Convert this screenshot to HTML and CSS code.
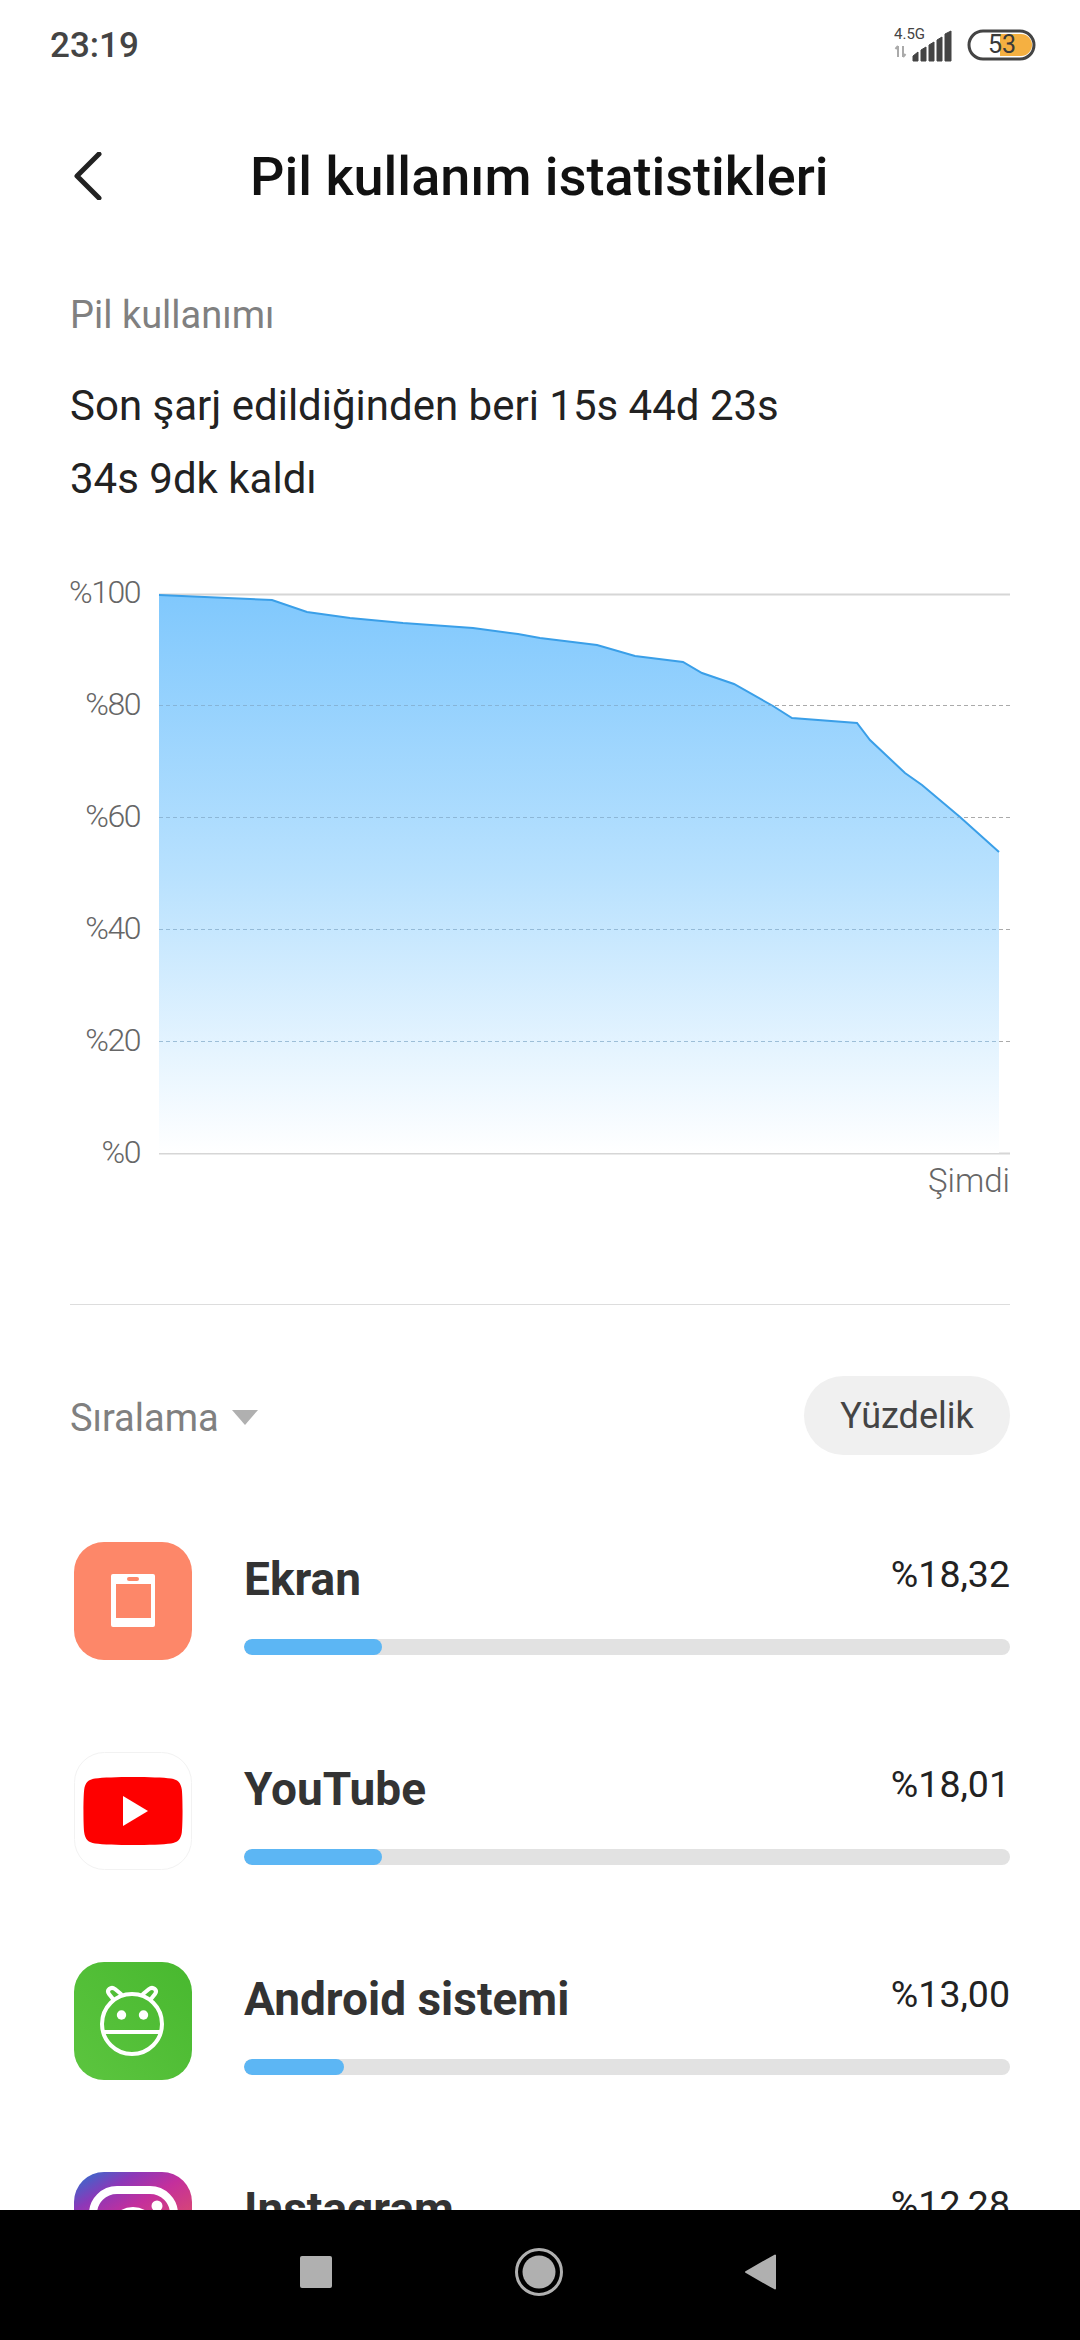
FILE: index.html
```html
<!DOCTYPE html>
<html lang="tr">
<head>
    <meta charset="UTF-8">
    <meta name="viewport" content="width=device-width, initial-scale=1.0">
    <title>Pil kullanım istatistikleri</title>
    <link rel="stylesheet" href="styles.css">
</head>
<body>

<div class="screen">
    <main class="content">
        <div class="status-bar">
            <span class="time">23:19</span>
            <svg class="status-icons" width="60" height="40" viewBox="0 0 60 40">
                <text x="0" y="14" class="net-label">4.5G</text>
                <path d="M4 21v11M1.500 24l2.500-3M9 21v11M11.500 29l-2.500 3" fill="none" stroke="#aaa" stroke-width="2"/>
                <path d="M19 36v-5l5-4v9zM27 36V25l5-3v14zM35 36V20l5-3v19zM43 36V15l5-3v24zM51 36V9l6-3v30z" fill="#444" stroke="#444" stroke-linejoin="round"/>
            </svg>
            <svg class="battery" width="70" height="32" viewBox="0 0 70 32">
                <path d="M33 5h21a11 11 0 0 1 0 22H33z" fill="#f5b041"/>
                <rect x="2" y="2" width="65" height="28" rx="14" fill="none" stroke="#444" stroke-width="3"/>
                <text x="35" y="24" class="battery-label">53</text>
            </svg>
        </div>

        <header class="title-bar">
            <svg class="back" width="30" height="48" viewBox="0 0 30 48">
                <path d="M27 2L5 24l22 22" fill="none" stroke="#222" stroke-width="5" stroke-linecap="round" stroke-linejoin="round"/>
            </svg>
            <h1>Pil kullanım istatistikleri</h1>
        </header>

        <section class="summary">
            <p class="summary-label">Pil kullanımı</p>
            <p class="summary-line">Son şarj edildiğinden beri 15s 44d 23s</p>
            <p class="summary-line">34s 9dk kaldı</p>
        </section>

        <svg class="chart" width="1080" height="606" viewBox="0 560 1080 606">
            <defs>
                <linearGradient id="areaFill" x1="0" y1="0" x2="0" y2="1">
                    <stop offset="0" stop-color="#80c8fd"/>
                    <stop offset="0.5" stop-color="#b8e1fe"/>
                    <stop offset="1" stop-color="#ffffff"/>
                </linearGradient>
            </defs>
            <path d="M159 594.500H1010" stroke="#d6d6d6" stroke-width="2"/>
            <path d="M159 705.500H1010M159 817.500H1010M159 929.500H1010M159 1041.500H1010" stroke="#aaa" stroke-dasharray="4 3"/>
            <path d="M159 1153.500H1010" stroke="#d6d6d6" stroke-width="2"/>
            <path d="M159 595L272 600L307 612L350 618L403 623L473 628L518 634L540 638L597 645L635 656L683 662L702 673L734 684L773 706L792 718L857 723L870 740L905 773L922 785L960 817L999 852V1153H159Z" fill="url(#areaFill)"/>
            <path d="M159 595L272 600L307 612L350 618L403 623L473 628L518 634L540 638L597 645L635 656L683 662L702 673L734 684L773 706L792 718L857 723L870 740L905 773L922 785L960 817L999 852" fill="none" stroke="#3a9fe8" stroke-width="2"/>
            <path d="M159 705.500H773M159 817.500H960M159 929.500H999M159 1041.500H999" stroke="#7fa6c6" stroke-opacity=".7" stroke-dasharray="4 3"/>
            <text x="140" y="603" class="axis-label">%100</text>
            <text x="140" y="715" class="axis-label">%80</text>
            <text x="140" y="827" class="axis-label">%60</text>
            <text x="140" y="939" class="axis-label">%40</text>
            <text x="140" y="1051" class="axis-label">%20</text>
            <text x="140" y="1163" class="axis-label">%0</text>
        </svg>
        <div class="chart-now">Şimdi</div>

        <div class="sort-bar">
            <span class="sort-label">Sıralama <i class="caret"></i></span>
            <span class="sort-button">Yüzdelik</span>
        </div>

        <ul class="usage-list">
            <li class="usage-row">
                <svg class="app-icon" width="118" height="118" viewBox="0 0 118 118">
                    <rect width="118" height="118" rx="30" fill="#fd8769"/>
                    <rect x="37" y="32" width="44" height="53" rx="2" fill="#fff"/>
                    <rect x="42" y="42" width="35" height="34" fill="#fd8769"/>
                    <rect x="53" y="35" width="12" height="4" rx="2" fill="#fd8769"/>
                </svg>
                <div class="usage-info">
                    <div class="usage-head"><span class="app-name">Ekran</span><span class="app-pct">%18,32</span></div>
                    <div class="bar"><div class="bar-fill" style="width: 18%"></div></div>
                </div>
            </li>
            <li class="usage-row">
                <svg class="app-icon" width="118" height="118" viewBox="0 0 118 118">
                    <rect x=".5" y=".5" width="117" height="117" rx="30" fill="#fff" stroke="#f2f2f2"/>
                    <path d="M21 26.500C36 24.500 82 24.500 97 26.500c6.500 .8 10 4.500 10.800 11 1 8 1 35 0 43-.8 6.500-4.300 10.200-10.800 11-15 2-61 2-76 0-6.500-.8-10-4.500-10.800-11-1-8-1-35 0-43 .8-6.500 4.300-10.200 10.800-11z" fill="#fe0000"/>
                    <path d="M49 44l25 15-25 15z" fill="#fff"/>
                </svg>
                <div class="usage-info">
                    <div class="usage-head"><span class="app-name">YouTube</span><span class="app-pct">%18,01</span></div>
                    <div class="bar"><div class="bar-fill" style="width: 18%"></div></div>
                </div>
            </li>
            <li class="usage-row">
                <svg class="app-icon" width="118" height="118" viewBox="0 0 118 118">
                    <defs>
                        <linearGradient id="androidFill" x1="1" y1="0" x2="0" y2="1">
                            <stop offset="0" stop-color="#48b82f"/>
                            <stop offset="1" stop-color="#5cc53f"/>
                        </linearGradient>
                    </defs>
                    <rect width="118" height="118" rx="30" fill="url(#androidFill)"/>
                    <circle cx="58" cy="62" r="30" fill="none" stroke="#fff" stroke-width="4"/>
                    <path d="M28 70h60" stroke="#fff" stroke-width="4"/>
                    <path d="M39 37l-4-5c-3-4 2-8 6-5l6 5M77 37l4-5c3-4-2-8-6-5l-6 5" fill="none" stroke="#fff" stroke-width="4" stroke-linecap="round"/>
                    <circle cx="47.500" cy="53" r="4.700" fill="#fff"/>
                    <circle cx="69.500" cy="53" r="4.700" fill="#fff"/>
                </svg>
                <div class="usage-info">
                    <div class="usage-head"><span class="app-name">Android sistemi</span><span class="app-pct">%13,00</span></div>
                    <div class="bar"><div class="bar-fill" style="width: 13%"></div></div>
                </div>
            </li>
            <li class="usage-row">
                <svg class="app-icon" width="118" height="118" viewBox="0 0 118 118">
                    <defs>
                        <linearGradient id="instaFill" x1="0.200" y1="0" x2="0.800" y2="1">
                            <stop offset="0" stop-color="#4a5fc8"/>
                            <stop offset="0.150" stop-color="#8c38b8"/>
                            <stop offset="0.350" stop-color="#c42f9c"/>
                            <stop offset="1" stop-color="#f26a3c"/>
                        </linearGradient>
                    </defs>
                    <rect width="118" height="118" rx="30" fill="url(#instaFill)"/>
                    <rect x="19" y="18" width="81" height="81" rx="24" fill="none" stroke="#fff" stroke-width="8"/>
                    <circle cx="59" cy="59" r="20" fill="none" stroke="#fff" stroke-width="8"/>
                    <circle cx="83" cy="34" r="5.500" fill="#fff"/>
                </svg>
                <div class="usage-info">
                    <div class="usage-head"><span class="app-name">Instagram</span><span class="app-pct">%12,28</span></div>
                    <div class="bar"><div class="bar-fill" style="width: 12%"></div></div>
                </div>
            </li>
        </ul>
    </main>

    <nav class="nav-bar">
        <svg width="32" height="32" viewBox="0 0 32 32"><rect width="32" height="32" rx="2" fill="#b0b0b0"/></svg>
        <svg width="50" height="50" viewBox="0 0 50 50">
            <circle cx="25" cy="25" r="22.500" fill="none" stroke="#b0b0b0" stroke-width="3"/>
            <circle cx="25" cy="25" r="16.500" fill="#b0b0b0"/>
        </svg>
        <svg width="31" height="36" viewBox="0 0 31 36"><path d="M30 1.500v33L1 18z" fill="#b0b0b0" stroke="#b0b0b0" stroke-width="2" stroke-linejoin="round"/></svg>
    </nav>
</div>

</body>
</html>
```

FILE: styles.css
```css
* {
    box-sizing: border-box;
}

html, body {
    margin: 0;
    padding: 0;
    background-color: white;
}

.screen {
    display: flex;
    flex-direction: column;
    width: 1080px;
    height: 2340px;
    overflow: hidden;
    font-family: 'Roboto', sans-serif;
    color: #333;
}

.content {
    flex: 1;
    min-height: 0;
    overflow: hidden;
}

/* Status bar */
.status-bar {
    display: flex;
    align-items: center;
    height: 90px;
    padding: 0 43px 0 50px;
}

.time {
    font-size: 35px;
    font-weight: 500;
    color: #444;
    margin-right: auto;
}

.status-icons {
    margin-right: 13px;
}

.net-label {
    font-size: 15px;
    fill: #444;
}

.battery-label {
    font-size: 25px;
    fill: #3a3a3a;
    text-anchor: middle;
}

/* Title */
.title-bar {
    display: flex;
    align-items: center;
    height: 88px;
    margin-top: 42px;
    padding-left: 72px;
}

.title-bar h1 {
    margin: 0 0 0 148px;
    font-size: 54px;
    font-weight: 500;
    color: #111;
}

/* Summary */
.summary {
    padding: 73px 70px 0;
}

.summary-label {
    margin: 0 0 32px;
    font-size: 38px;
    line-height: 44px;
    color: #808080;
}

.summary-line {
    margin: 0;
    font-size: 42px;
    line-height: 73px;
    color: #222;
}

/* Chart */
.chart {
    display: block;
    margin-top: 45px;
    overflow: visible;
}

.axis-label {
    font-size: 32px;
    font-weight: 300;
    letter-spacing: -1.500px;
    fill: #666;
    text-anchor: end;
}

.chart-now {
    padding-right: 70px;
    text-align: right;
    font-size: 33px;
    line-height: 30px;
    font-weight: 300;
    color: #666;
}

/* Sort row */
.sort-bar {
    display: flex;
    align-items: center;
    justify-content: space-between;
    margin: 108px 70px 0;
    padding-top: 71px;
    border-top: 1px solid #ddd;
}

.sort-label {
    padding-top: 4px;
    font-size: 38px;
    color: #808080;
}

.caret {
    display: inline-block;
    margin-left: 4px;
    border-left: 13px solid transparent;
    border-right: 13px solid transparent;
    border-top: 15px solid #b0b0b0;
    vertical-align: 6px;
}

.sort-button {
    display: flex;
    align-items: center;
    justify-content: center;
    width: 206px;
    height: 79px;
    border-radius: 40px;
    background-color: #f0f0f0;
    font-size: 36px;
    color: #444;
}

/* App list */
.usage-list {
    list-style: none;
    margin: 87px 0 0;
    padding: 0 70px 0 74px;
}

.usage-row {
    display: flex;
    height: 118px;
    margin-bottom: 92px;
}

.app-icon {
    flex-shrink: 0;
}

.usage-info {
    flex: 1;
    margin-left: 52px;
}

.usage-head {
    display: flex;
    justify-content: space-between;
    height: 97px;
}

.app-name {
    font-size: 46px;
    font-weight: 700;
    line-height: 74px;
    color: #333;
}

.app-pct {
    font-size: 37.500px;
    line-height: 64px;
    color: #222;
}

.bar {
    height: 16px;
    border-radius: 8px;
    background-color: #e2e2e2;
    overflow: hidden;
}

.bar-fill {
    height: 100%;
    border-radius: 8px;
    background-color: #5cb6f4;
}

/* Navigation bar */
.nav-bar {
    display: flex;
    align-items: center;
    flex-shrink: 0;
    justify-content: space-between;
    height: 130px;
    padding: 0 304px 6px 300px;
    background-color: black;
}
```
